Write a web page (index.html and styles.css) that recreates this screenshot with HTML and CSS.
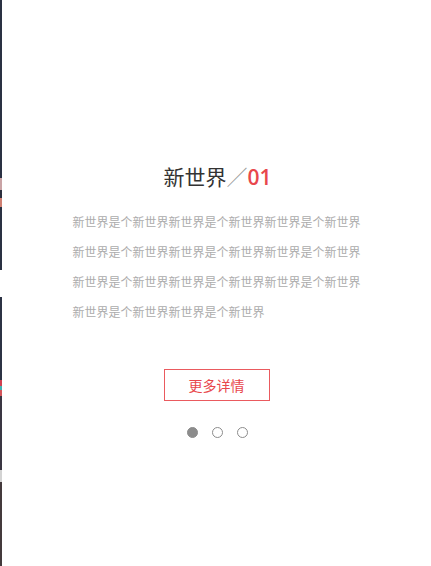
FILE: index.html
```html
<!DOCTYPE html>
<html lang="zh">
<head>
<meta charset="utf-8">
<title>新世界</title>
<link rel="stylesheet" href="styles.css">
</head>
<body>
<div class="page">
  <div class="edge">
    <div class="edge-top"></div>
    <div class="edge-gap"></div>
    <div class="edge-bottom"></div>
  </div>
  <main class="slide">
    <h1 class="title">新世界<span class="sep">／</span><span class="num">01</span></h1>
    <p class="desc">新世界是个新世界新世界是个新世界新世界是个新世界新世界是个新世界新世界是个新世界新世界是个新世界新世界是个新世界新世界是个新世界新世界是个新世界新世界是个新世界新世界是个新世界</p>
    <a class="more" href="#">更多详情</a>
    <div class="dots">
      <span class="dot active"></span>
      <span class="dot"></span>
      <span class="dot"></span>
    </div>
  </main>
</div>
</body>
</html>
```

FILE: styles.css
```css
html, body {
  margin: 0;
  padding: 0;
  background: #fff;
}
.page {
  display: flex;
  width: 431px;
  height: 566px;
  overflow: hidden;
  font-family: "Noto Sans CJK SC", "Noto Sans", sans-serif;
}
.edge {
  width: 2px;
  display: flex;
  flex-direction: column;
  flex-shrink: 0;
}
.edge-top {
  height: 270px;
  background: linear-gradient(to bottom,
    #2a3143 0, #2a3143 178px,
    #c9a3a5 178px, #c9a3a5 190px,
    #2b2f3d 190px, #2b2f3d 198px,
    #cf7f72 198px, #cf7f72 207px,
    #2a3143 207px, #2a3143 270px);
}
.edge-gap {
  height: 27px;
  background: #fff;
}
.edge-bottom {
  flex: 1;
  background: linear-gradient(to bottom,
    #2c3244 0, #2c3244 83px,
    #cf4150 83px, #cf4150 89px,
    #3fb2b4 89px, #3fb2b4 93px,
    #d2545a 93px, #d2545a 99px,
    #3a3643 99px, #3a3643 173px,
    #d3d3d3 173px, #d3d3d3 185px,
    #443a3c 185px, #443a3c 269px);
}
.slide {
  flex: 1;
  display: flex;
  flex-direction: column;
  align-items: center;
  padding-top: 161px;
}
.title {
  margin: 0 0 0 2px;
  font-size: 21px;
  line-height: 30px;
  font-weight: 400;
  color: #333;
  white-space: nowrap;
}
.sep {
  color: #999;
  font-weight: 300;
}
.num {
  color: #e8474c;
  font-family: "Open Sans", "Noto Sans", sans-serif;
  font-weight: 600;
  font-size: 21px;
}
.desc {
  margin: 15px 0 0;
  width: 290px;
  font-size: 12px;
  line-height: 30px;
  color: #acacac;
  word-break: break-all;
  padding-left: 2px;
}
.more {
  margin-top: 42px;
  width: 104px;
  height: 30px;
  border: 1px solid #ea5a5e;
  color: #e8474c;
  font-size: 14px;
  line-height: 30px;
  text-align: center;
  text-decoration: none;
}
.dots {
  margin-top: 26px;
  margin-left: 2px;
  display: flex;
  gap: 14px;
}
.dot {
  width: 9px;
  height: 9px;
  border: 1px solid #8c8c8c;
  border-radius: 50%;
  background: #fff;
}
.dot.active {
  background: #8c8c8c;
}
```
